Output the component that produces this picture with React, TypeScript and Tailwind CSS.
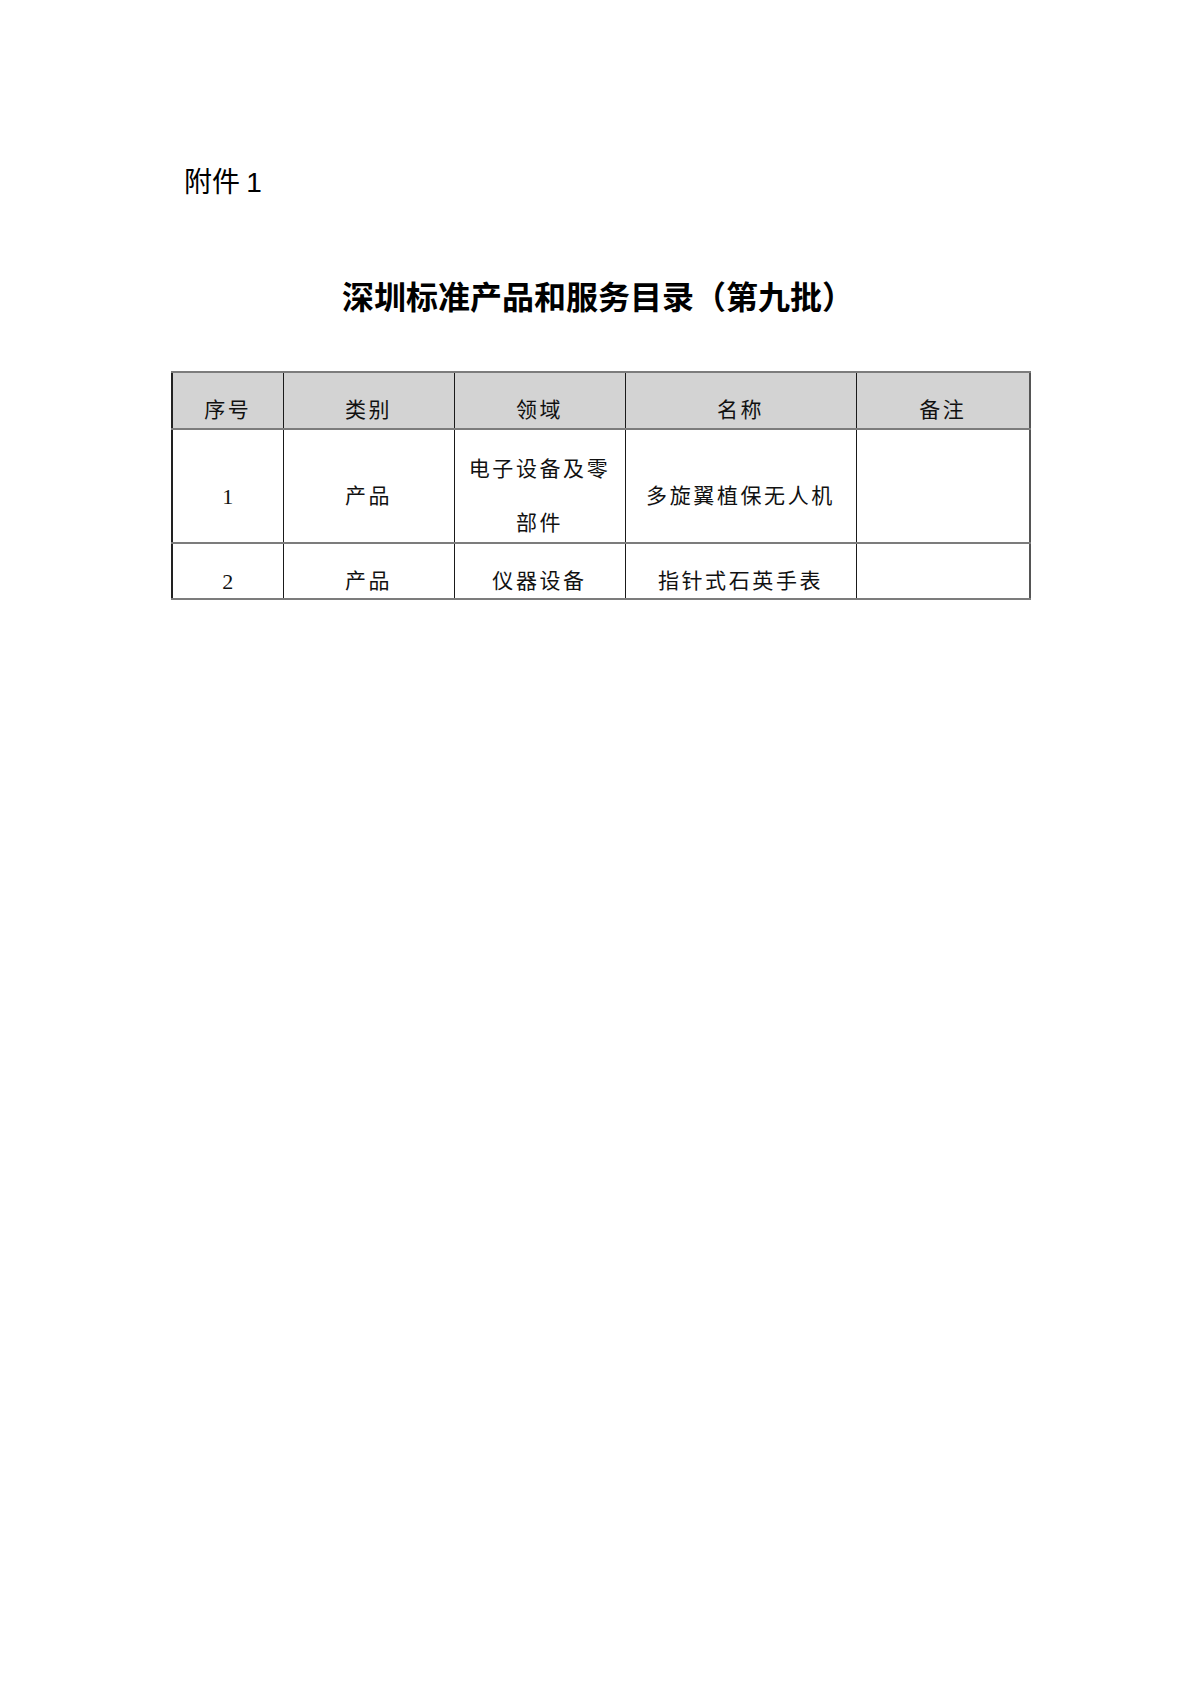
const cellFont = {
  fontFamily: '"Liberation Serif", "Noto Sans CJK SC", serif',
};

interface Row {
  no: string;
  kind: string;
  field: string[];
  name: string;
  note: string;
}

const rows: Row[] = [
  { no: "1", kind: "产品", field: ["电子设备及零", "部件"], name: "多旋翼植保无人机", note: "" },
  { no: "2", kind: "产品", field: ["仪器设备"], name: "指针式石英手表", note: "" },
];

const headers = [
  { label: "序号", w: "w-[111px]" },
  { label: "类别", w: "w-[171px]" },
  { label: "领域", w: "w-[171px]" },
  { label: "名称", w: "w-[231px]" },
  { label: "备注", w: "w-[174px]" },
];

const cellBase =
  "border-x border-x-[#1a1a1a] border-y-2 border-y-[#7c7c7c] p-0 pt-[20px] text-center align-middle text-[21px] leading-[21px] tracking-[2.6px] text-[#111]";

export default function App() {
  return (
    <div
      className="min-h-[1696px] w-full bg-white text-black"
      style={{ fontFamily: '"Noto Sans CJK SC", sans-serif' }}
    >
      {/* Attachment label */}
      <div className="pl-[184px] pt-[162px] text-[28px] leading-[36px]">
        附件 <span style={{ fontFamily: '"Liberation Sans", sans-serif' }}>1</span>
      </div>

      {/* Title */}
      <h1 className="mt-[74px] pl-[342px] text-[32px] font-bold leading-[40px]">
        深圳标准产品和服务目录（第九批）
      </h1>

      {/* Catalogue table */}
      <div className="mt-[56px] pl-[171px]">
        <table
          className="w-[858px] table-fixed border-collapse border-2 border-[#555] border-l-[#222]"
          style={cellFont}
        >
          <thead>
            <tr className="h-[57px] bg-[#d3d3d3]">
              {headers.map((h) => (
                <th key={h.label} className={`${cellBase} ${h.w} font-normal`}>
                  {h.label}
                </th>
              ))}
            </tr>
          </thead>
          <tbody>
            {rows.map((r) => (
              <tr key={r.no} className={r.field.length > 1 ? "h-[114px]" : "h-[56px]"}>
                <td className={`${cellBase} text-[22px] tracking-normal`}>{r.no}</td>
                <td className={cellBase}>{r.kind}</td>
                <td className={cellBase}>
                  <div className="flex flex-col items-center gap-[33px]">
                    {r.field.map((line) => (
                      <span key={line}>{line}</span>
                    ))}
                  </div>
                </td>
                <td className={cellBase}>{r.name}</td>
                <td className={cellBase}>{r.note}</td>
              </tr>
            ))}
          </tbody>
        </table>
      </div>
    </div>
  );
}
